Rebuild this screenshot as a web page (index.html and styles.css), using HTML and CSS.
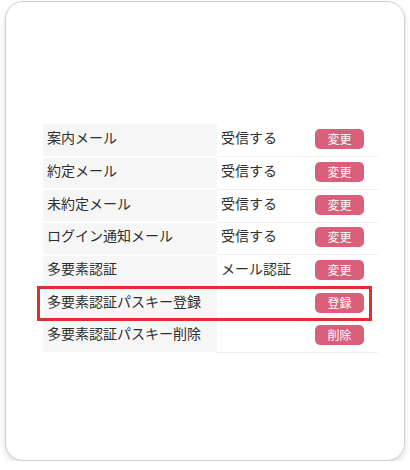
FILE: index.html
```html
<!DOCTYPE html>
<html lang="ja">
<head>
<meta charset="utf-8">
<link rel="stylesheet" href="styles.css">
</head>
<body>
<div class="card">
  <div class="wrap">
    <table class="settings">
      <tr><td class="label">案内メール</td><td class="val">受信する</td><td class="act"><span class="btn">変更</span></td></tr>
      <tr><td class="label">約定メール</td><td class="val">受信する</td><td class="act"><span class="btn">変更</span></td></tr>
      <tr><td class="label">未約定メール</td><td class="val">受信する</td><td class="act"><span class="btn">変更</span></td></tr>
      <tr><td class="label">ログイン通知メール</td><td class="val">受信する</td><td class="act"><span class="btn">変更</span></td></tr>
      <tr><td class="label">多要素認証</td><td class="val">メール認証</td><td class="act"><span class="btn">変更</span></td></tr>
      <tr><td class="label">多要素認証パスキー登録</td><td class="val"></td><td class="act"><span class="btn">登録</span></td></tr>
      <tr><td class="label">多要素認証パスキー削除</td><td class="val"></td><td class="act"><span class="btn">削除</span></td></tr>
    </table>
    <div class="highlight"></div>
  </div>
</div>
</body>
</html>
```
FILE: styles.css
```css
html, body {
  margin: 0;
  padding: 0;
  background: #ffffff;
}
body {
  font-family: "Noto Sans CJK JP", "Noto Sans", sans-serif;
  color: #2f2f2f;
}
.card {
  margin: 1px 5px 0 5px;
  height: 460px;
  border: 1px solid #cfcfcf;
  border-radius: 18px;
  box-shadow: 0 3px 6px rgba(0, 0, 0, 0.14);
  background: #ffffff;
  padding: 122px 0 0 37px;
  box-sizing: border-box;
}
.wrap {
  position: relative;
  width: 335px;
}
.settings {
  border-collapse: collapse;
  width: 335px;
  table-layout: fixed;
  font-size: 14px;
}
.settings td {
  height: 32.7px;
  padding: 0 0 6px 4px;
  border-bottom: 1px solid #efefef;
  box-sizing: border-box;
  vertical-align: middle;
  white-space: nowrap;
}
.settings td.label {
  width: 174px;
  background: #f6f6f6;
  border-bottom: 2px solid #ffffff;
}
.settings td.val {
  width: 94px;
}
.settings td.act {
  width: 67px;
  padding-top: 0;
  padding-bottom: 3px;
}
.btn {
  display: inline-block;
  width: 49px;
  height: 20px;
  line-height: 20px;
  text-align: center;
  background: #d95f7a;
  color: #ffffff;
  font-size: 12px;
  border-radius: 5px;
}
.highlight {
  position: absolute;
  left: -6px;
  top: 162px;
  width: 335px;
  height: 35px;
  border: 3px solid #e0302c;
  box-sizing: border-box;
}
```
